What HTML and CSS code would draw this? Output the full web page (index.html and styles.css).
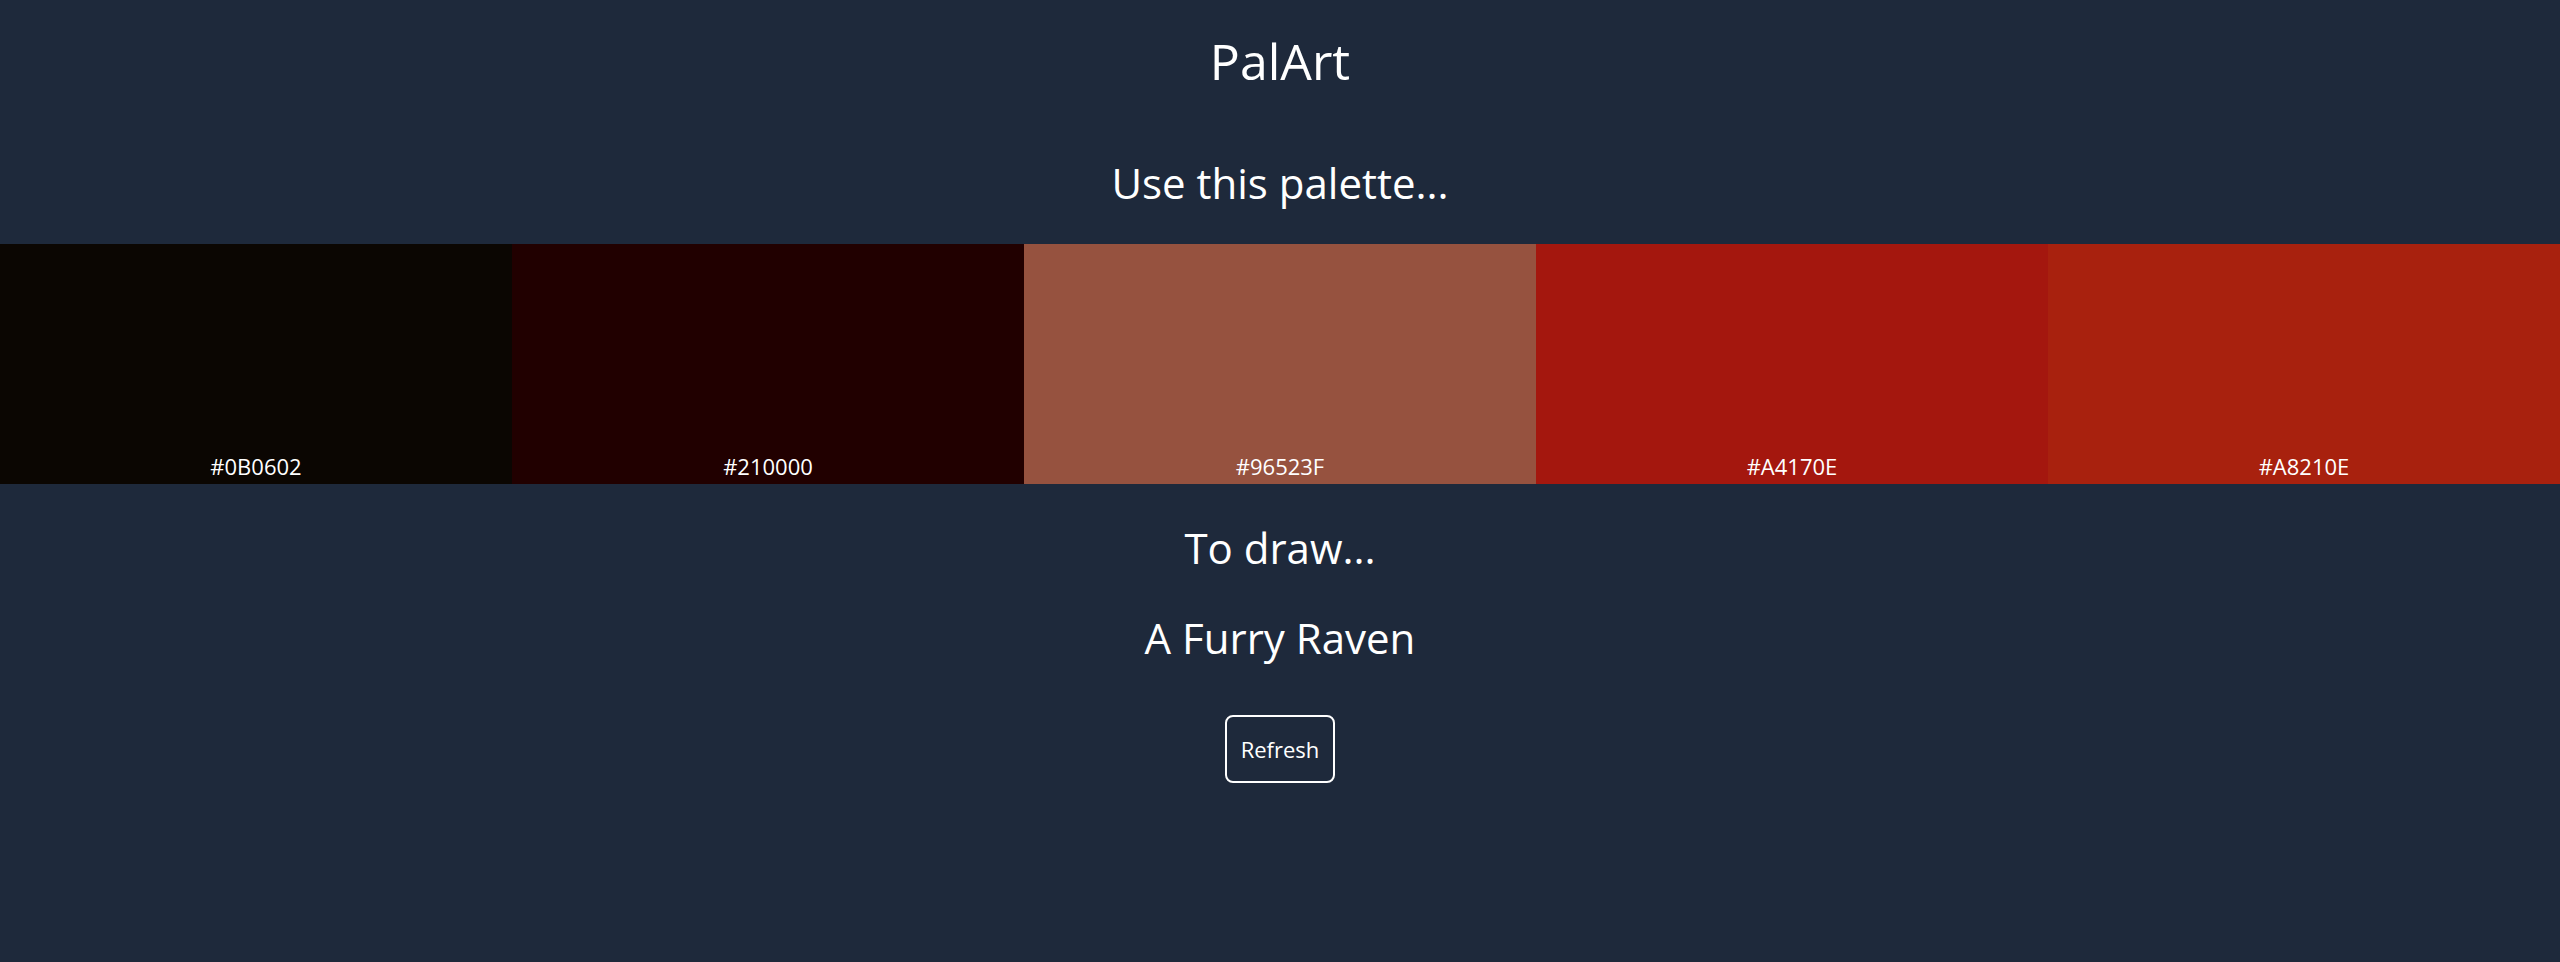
FILE: index.html
```html
<!DOCTYPE html>
<html lang="en">
<head>
<meta charset="utf-8">
<title>PalArt</title>
<link rel="stylesheet" href="styles.css">
</head>
<body>
<main class="app">
  <h1 class="title">PalArt</h1>
  <h2 class="heading heading-palette">Use this palette...</h2>
  <section class="palette">
    <div class="swatch" style="background:#0B0602"><span class="hex">#0B0602</span></div>
    <div class="swatch" style="background:#210000"><span class="hex">#210000</span></div>
    <div class="swatch" style="background:#96523F"><span class="hex">#96523F</span></div>
    <div class="swatch" style="background:#A4170E"><span class="hex">#A4170E</span></div>
    <div class="swatch" style="background:#A8210E"><span class="hex">#A8210E</span></div>
  </section>
  <h2 class="heading heading-draw">To draw...</h2>
  <h2 class="heading heading-subject">A Furry Raven</h2>
  <button class="refresh" type="button">Refresh</button>
</main>
</body>
</html>
```

FILE: styles.css
```css
html, body {
  margin: 0;
  padding: 0;
  background: #1e293b;
  height: 100%;
}
body {
  font-family: "Open Sans", "Noto Sans", sans-serif;
  color: #ffffff;
}
.app {
  display: flex;
  flex-direction: column;
  align-items: center;
  padding-top: 36px;
}
.title {
  margin: 0;
  font-size: 50px;
  font-weight: 400;
  line-height: 1;
}
.heading {
  margin: 0;
  font-size: 42px;
  font-weight: 400;
  line-height: 1;
}
.heading-palette {
  margin-top: 76px;
}
.palette {
  margin-top: 40px;
  align-self: stretch;
  display: grid;
  grid-template-columns: repeat(5, 1fr);
  height: 240px;
}
.swatch {
  display: flex;
  align-items: flex-end;
  justify-content: center;
  padding-bottom: 7px;
  box-sizing: border-box;
}
.hex {
  font-size: 22px;
  line-height: 1;
}
.heading-draw {
  margin-top: 43px;
}
.heading-subject {
  margin-top: 48px;
}
.refresh {
  margin-top: 56px;
  width: 110px;
  height: 68px;
  box-sizing: border-box;
  background: transparent;
  border: 2px solid #ffffff;
  border-radius: 8px;
  color: #ffffff;
  font-family: "Open Sans", "Noto Sans", sans-serif;
  font-size: 22px;
  padding: 0;
  cursor: pointer;
}
```
